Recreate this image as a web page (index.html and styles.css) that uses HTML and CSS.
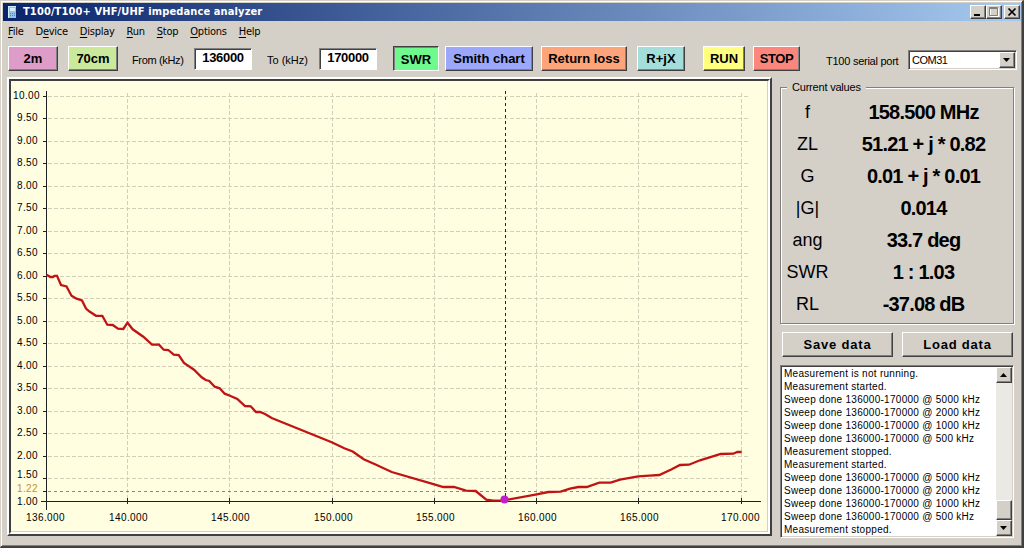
FILE: index.html
```html
<!doctype html>

<html lang="en">
  <head>
    <meta charset="utf-8"/>
    <title>T100/T100+ VHF/UHF impedance analyzer</title>
    <meta name="viewport" content="width=device-width,initial-scale=1.0"/>
    <link rel="stylesheet" href="styles.css">
  </head>
  <body>
    <div class="window">
      <div class="titlebar">
        <svg class="titlebar__icon" width="10" height="14" viewBox="0 0 10 14">
          <path fill="#8fc3ea" d="M1 1h8v12H1z"/>
          <path fill="#d5ecfa" d="M1 1h8v1H1zM1 1h1v12H1zM3 3h5v3H3z"/>
          <path fill="#4d86c4" d="M3 8h1v1H3zM5 8h1v1H5zM7 8h1v1H7zM3 10h1v1H3zM5 10h1v1H5zM7 10h1v1H7z"/>
        </svg>
        <span class="titlebar__text">T100/T100+ VHF/UHF impedance analyzer</span>
        <div class="titlebar__controls">
          <button class="control">
            <svg width="12" height="10" viewBox="0 0 12 10"><path d="M2 7h6v2H2z"/></svg>
          </button>
          <button class="control">
            <svg width="12" height="10" viewBox="0 0 12 10"><path fill="none" stroke="#fff" d="M2.5 1.5h8v8h-8z"/><path fill="none" stroke="#808080" d="M1.5 .5h8v8h-8zM1 1.5h9"/></svg>
          </button>
          <button class="control control_close">
            <svg width="12" height="10" viewBox="0 0 12 10"><path fill="none" stroke="#000" stroke-width="1.7" d="M2.5 1.5l7 7M9.5 1.5l-7 7"/></svg>
          </button>
        </div>
      </div>

      <ul class="menu">
        <li><u>F</u>ile</li>
        <li>D<u>e</u>vice</li>
        <li><u>D</u>isplay</li>
        <li><u>R</u>un</li>
        <li><u>S</u>top</li>
        <li><u>O</u>ptions</li>
        <li><u>H</u>elp</li>
      </ul>

      <div class="toolbar">
        <button class="button button_2m">2m</button>
        <button class="button button_70cm">70cm</button>
        <label class="toolbar__label toolbar__from">From (kHz)</label>
        <div class="input">136000</div>
        <label class="toolbar__label toolbar__to">To (kHz)</label>
        <div class="input">170000</div>
        <button class="button button_swr">SWR</button>
        <button class="button button_smith">Smith chart</button>
        <button class="button button_loss">Return loss</button>
        <button class="button button_rjx">R+jX</button>
        <button class="button button_run">RUN</button>
        <button class="button button_stop">STOP</button>
        <label class="toolbar__label toolbar__port">T100 serial port</label>
        <div class="select">
          <span class="select__value">COM31</span>
          <span class="arrow"><svg width="8" height="4" viewBox="0 0 8 4"><path d="M0 0h7L3.500 4z"/></svg></span>
        </div>
      </div>

      <div class="main">
        <div class="panel">
          <svg class="chart" width="757" height="451" viewBox="11 81 757 451">
            <g class="chart__grid">
              <path d="M48 96.500H750M48 118.500H750M48 141.500H750M48 163.500H750M48 186.500H750M48 208.500H750M48 231.500H750M48 253.500H750M48 276.500H750M48 298.500H750M48 321.500H750M48 343.500H750M48 366.500H750M48 388.500H750M48 411.500H750M48 433.500H750M48 456.500H750M48 478.500H750"/>
              <path d="M127.500 93V500M229.500 93V500M332.500 93V500M434.500 93V500M536.500 93V500M638.500 93V500M741.500 93V500"/>
            </g>
            <path class="chart__limit" d="M48 491.500H750"/>
            <path class="chart__axis" d="M46.500 91V510M41 501.500H761"/>
            <path class="chart__axis" d="M43 96.500h4M43 118.500h4M43 141.500h4M43 163.500h4M43 186.500h4M43 208.500h4M43 231.500h4M43 253.500h4M43 276.500h4M43 298.500h4M43 321.500h4M43 343.500h4M43 366.500h4M43 388.500h4M43 411.500h4M43 433.500h4M43 456.500h4M43 478.500h4M43 491.500h4"/>
            <path class="chart__axis" d="M127.500 498v6M229.500 498v6M332.500 498v6M434.500 498v6M536.500 498v6M638.500 498v6M741.500 498v6"/>

            <g class="chart__labels">
              <text x="26.500" y="99">10.00</text>
              <text x="27.500" y="121">9.50</text>
              <text x="27.500" y="144">9.00</text>
              <text x="27.500" y="166">8.50</text>
              <text x="27.500" y="189">8.00</text>
              <text x="27.500" y="211">7.50</text>
              <text x="27.500" y="234">7.00</text>
              <text x="27.500" y="256">6.50</text>
              <text x="27.500" y="279">6.00</text>
              <text x="27.500" y="301">5.50</text>
              <text x="27.500" y="324">5.00</text>
              <text x="27.500" y="346">4.50</text>
              <text x="27.500" y="369">4.00</text>
              <text x="27.500" y="391">3.50</text>
              <text x="27.500" y="414">3.00</text>
              <text x="27.500" y="436">2.50</text>
              <text x="27.500" y="459">2.00</text>
              <text x="27.500" y="478">1.50</text>
              <text x="27.500" y="492" class="chart__limit-label">1.22</text>
              <text x="27.500" y="505">1.00</text>
              <text x="45.500" y="521">136.000</text>
              <text x="128.500" y="521">140.000</text>
              <text x="230.500" y="521">145.000</text>
              <text x="333.500" y="521">150.000</text>
              <text x="435.500" y="521">155.000</text>
              <text x="537.500" y="521">160.000</text>
              <text x="639.500" y="521">165.000</text>
              <text x="740.500" y="521">170.000</text>
            </g>

            <polyline class="chart__curve" points="46.5,274.7 50.5,277 53,277 54.5,275.8 57,275.8 61,285 66.5,286.500 71.5,295.700 76.5,298.700 82,300.500 86,308.500 89.5,311.500 96,315.800 102.3,315.800 107.3,324.700 112.700,325 118,328.700 123.300,329 127.500,322.700 132.700,329.300 143.300,336.700 152,344.700 159,344.700 163.700,349.700 168.300,350 173.700,354.700 178.700,355 184,363 194,369.700 201.700,377.300 205.700,380 209.300,381 214.700,386.700 219.700,388.300 224.700,393.700 230,395.700 237.300,399 245,406 250.700,406.300 256,412 260,412 265,414 271.700,418 331.700,442.300 344.300,448.300 352.700,451.500 363.700,459.300 375,464.300 391.700,472 434.300,484.300 443.300,487 454,487 466,490.700 475.700,491 486.300,499.700 493.300,500.700 504,500.300 536.700,494.300 548.300,492 560.700,491.700 570,488.700 578.300,487 586.700,487 599.300,482.700 610.700,482.700 620,479.700 638.300,476.300 649.300,475.700 659.300,475 671.700,469.300 680,465 689,464.700 700,460.300 720.700,454 733.300,453.700 737.300,452 741.700,452"/>
            <path class="chart__cursor" d="M505.500 91V497"/>
            <circle class="chart__marker" cx="504.500" cy="499.500" r="4"/>
          </svg>
        </div>

        <div class="side">
          <fieldset class="values">
            <legend class="values__title">Current values</legend>
            <dl class="values__list">
              <dt>f</dt><dd>158.500 MHz</dd>
              <dt>ZL</dt><dd>51.21 + j * 0.82</dd>
              <dt>G</dt><dd>0.01 + j * 0.01</dd>
              <dt>|G|</dt><dd>0.014</dd>
              <dt>ang</dt><dd>33.7 deg</dd>
              <dt>SWR</dt><dd>1 : 1.03</dd>
              <dt>RL</dt><dd>-37.08 dB</dd>
            </dl>
          </fieldset>

          <div class="actions">
            <button class="button button_data">Save data</button>
            <button class="button button_data">Load data</button>
          </div>

          <div class="log">
            <ul class="log__lines">
              <li>Measurement is not running.</li>
              <li>Measurement started.</li>
              <li>Sweep done 136000-170000 @ 5000 kHz</li>
              <li>Sweep done 136000-170000 @ 2000 kHz</li>
              <li>Sweep done 136000-170000 @ 1000 kHz</li>
              <li>Sweep done 136000-170000 @ 500 kHz</li>
              <li>Measurement stopped.</li>
              <li>Measurement started.</li>
              <li>Sweep done 136000-170000 @ 5000 kHz</li>
              <li>Sweep done 136000-170000 @ 2000 kHz</li>
              <li>Sweep done 136000-170000 @ 1000 kHz</li>
              <li>Sweep done 136000-170000 @ 500 kHz</li>
              <li>Measurement stopped.</li>
            </ul>
            <div class="scrollbar">
              <span class="arrow"><svg width="8" height="4" viewBox="0 0 8 4"><path d="M0 4h7L3.500 0z"/></svg></span>
              <span class="scrollbar__thumb"></span>
              <span class="arrow"><svg width="8" height="4" viewBox="0 0 8 4"><path d="M0 0h7L3.500 4z"/></svg></span>
            </div>
          </div>
        </div>
      </div>
    </div>
  </body>
</html>
```
FILE: styles.css
```css
* {
  box-sizing: border-box;
}
body {
  font-family: "Liberation Sans", Arial, sans-serif;
  font-size: 12px;
  color: #000;
  background-color: #d4d0c8;
  margin: 0;
  overflow: hidden;
}
.window {
  width: 1024px;
  height: 548px;
  padding: 1px 1px 0 1px;
  border: 1px solid #d4d0c8;
  border-right: 2px solid #404040;
  border-bottom: 2px solid #404040;
  box-shadow: 1px 1px 0 #fff inset, -1px -1px 0 #808080 inset;
}
.titlebar {
  display: flex;
  align-items: center;
  height: 18px;
  margin: 1px 0 0 1px;
  padding: 0 1px 0 4px;
  background: linear-gradient(to right, #0a246a, #a6caf0);
}
.titlebar__icon {
  flex-shrink: 0;
}
.titlebar__text {
  flex: 1;
  margin-left: 6px;
  font-family: "DejaVu Sans Condensed", "DejaVu Sans", sans-serif;
  font-size: 11px;
  font-weight: bold;
  line-height: 18px;
  letter-spacing: 0.12px;
  color: #fff;
  white-space: nowrap;
}
.titlebar__controls {
  display: flex;
}
.control {
  display: flex;
  width: 16px;
  height: 14px;
  padding: 1px;
  background-color: #d4d0c8;
  border: 1px solid;
  border-color: #fff #404040 #404040 #fff;
  box-shadow: -1px -1px 0 #808080 inset;
}
.control_close {
  margin-left: 2px;
}
.menu {
  display: flex;
  list-style: none;
  height: 22px;
  margin: 0;
  padding: 0 0 0 6px;
  font-family: "DejaVu Sans Condensed", "DejaVu Sans", sans-serif;
  font-size: 11px;
  line-height: 21px;
  letter-spacing: -0.25px;
  gap: 12px;
}
.menu u {
  text-underline-offset: 2px;
}
.toolbar {
  display: flex;
  height: 34px;
  padding: 3px 0 0 6px;
}
.toolbar__label {
  flex-shrink: 0;
  margin-top: 7px;
  font-size: 11px;
  line-height: 14px;
  white-space: nowrap;
}
.toolbar__from {
  width: 62px;
  margin-left: 14px;
  letter-spacing: -0.35px;
}
.toolbar__to {
  width: 52px;
  margin-left: 15px;
}
.toolbar__port {
  width: 82px;
  margin: 8px 0 0 26px;
  letter-spacing: -0.25px;
}
.button {
  flex-shrink: 0;
  height: 25px;
  padding: 0;
  font-family: inherit;
  font-size: 13px;
  font-weight: bold;
  line-height: 20px;
  white-space: nowrap;
  color: #000;
  background-color: #d4d0c8;
  border: 1px solid;
  border-color: #fff #404040 #404040 #fff;
  box-shadow: -1px -1px 0 #808080 inset;
}
.button_2m {
  width: 50px;
  background-color: #de9dc9;
}
.button_70cm {
  width: 50px;
  margin-left: 10px;
  background-color: #cbe99b;
}
.button_swr {
  width: 46px;
  margin-left: 16px;
  padding-top: 2px;
  background-color: #70f98c;
  border-color: #404040 #fff #fff #404040;
  box-shadow: 1px 1px 0 #808080 inset;
}
.button_smith {
  width: 88px;
  margin-left: 6px;
  background-color: #9ba7fa;
}
.button_loss {
  width: 86px;
  margin-left: 8px;
  background-color: #fda47a;
}
.button_rjx {
  width: 48px;
  margin-left: 10px;
  background-color: #a3dedb;
}
.button_run {
  width: 42px;
  margin-left: 18px;
  background-color: #ffff80;
}
.button_stop {
  width: 47px;
  margin-left: 8px;
  letter-spacing: -0.4px;
  background-color: #fb877c;
}
.button_data {
  width: 111px;
  letter-spacing: 0.8px;
}
.input {
  flex-shrink: 0;
  width: 58px;
  height: 22px;
  margin-top: 2px;
  font-size: 13px;
  font-weight: bold;
  line-height: 18px;
  letter-spacing: -0.35px;
  text-align: center;
  background-color: #fff;
  border: 1px solid;
  border-color: #808080 #fff #fff #808080;
  box-shadow: 1px 1px 0 #404040 inset;
}
.select {
  display: flex;
  width: 109px;
  height: 20px;
  margin-top: 4px;
  padding: 1px;
  background-color: #fff;
  border: 1px solid;
  border-color: #808080 #fff #fff #808080;
  box-shadow: 1px 1px 0 #404040 inset, -1px -1px 0 #d4d0c8 inset;
}
.select__value {
  flex: 1;
  padding-left: 2px;
  font-size: 11px;
  line-height: 17px;
  letter-spacing: -0.5px;
}
.arrow {
  display: flex;
  flex-shrink: 0;
  justify-content: center;
  align-items: center;
  width: 16px;
  height: 16px;
  background-color: #d4d0c8;
  border: 1px solid;
  border-color: #fff #404040 #404040 #fff;
  box-shadow: -1px -1px 0 #808080 inset;
}
.main {
  display: flex;
  padding-left: 5px;
}
.panel {
  width: 765px;
  height: 459px;
  border: 2px solid;
  border-color: #fff #404040 #404040 #fff;
}
.chart {
  display: block;
  box-sizing: content-box;
  background-color: #fffee1;
  border: 2px solid;
  border-color: #404040 #fff #fff #404040;
  box-shadow: -1px -1px 0 #d4d0c8 inset;
}
.chart__grid {
  fill: none;
  stroke: #d2d0b8;
  stroke-dasharray: 4 2;
}
.chart__limit {
  stroke: #b88428;
  stroke-dasharray: 3 3;
}
.chart__axis {
  stroke: #202020;
}
.chart__labels {
  font-size: 10px;
  letter-spacing: 0.4px;
  text-anchor: middle;
}
.chart__limit-label {
  fill: #c89030;
}
.chart__curve {
  fill: none;
  stroke: #c01414;
  stroke-width: 2.3;
}
.chart__cursor {
  stroke: #1414a0;
  stroke-dasharray: 3 3;
}
.chart__marker {
  fill: #c020c8;
}
.side {
  width: 234px;
  margin-left: 8px;
}
.values {
  height: 243px;
  margin: 4px 0 0;
  padding: 0;
  border: 1px solid #808080;
  box-shadow: 1px 1px 0 #fff, 1px 1px 0 #fff inset;
}
.values__title {
  margin-left: 6px;
  padding: 0 5px;
  font-size: 11px;
  line-height: 12px;
  letter-spacing: -0.2px;
  background-color: #d4d0c8;
}
.values__list {
  display: grid;
  grid-template-columns: 53px 1fr;
  grid-auto-rows: 32px;
  margin: 3px 0 0;
  font-size: 18px;
  line-height: 32px;
  text-align: center;
}
.values__list dd {
  margin: 0;
  font-size: 20px;
  font-weight: bold;
  letter-spacing: -0.8px;
}
.actions {
  display: flex;
  gap: 9px;
  margin-top: 8px;
  padding-left: 2px;
}
.log {
  display: flex;
  justify-content: space-between;
  height: 173px;
  margin-top: 8px;
  padding: 1px;
  background-color: #fff;
  border: 1px solid;
  border-color: #808080 #fff #fff #808080;
  box-shadow: 1px 1px 0 #404040 inset, -1px -1px 0 #d4d0c8 inset;
}
.log__lines {
  list-style: none;
  margin: 0;
  padding: 0 0 0 2px;
  font-size: 10px;
  line-height: 13px;
  letter-spacing: 0.28px;
  white-space: nowrap;
}
.scrollbar {
  display: flex;
  flex-direction: column;
  width: 16px;
  background-color: #ebe9e4;
}
.scrollbar__thumb {
  height: 20px;
  margin-top: auto;
  background-color: #d4d0c8;
  border: 1px solid;
  border-color: #fff #404040 #404040 #fff;
  box-shadow: -1px -1px 0 #808080 inset;
}
```
